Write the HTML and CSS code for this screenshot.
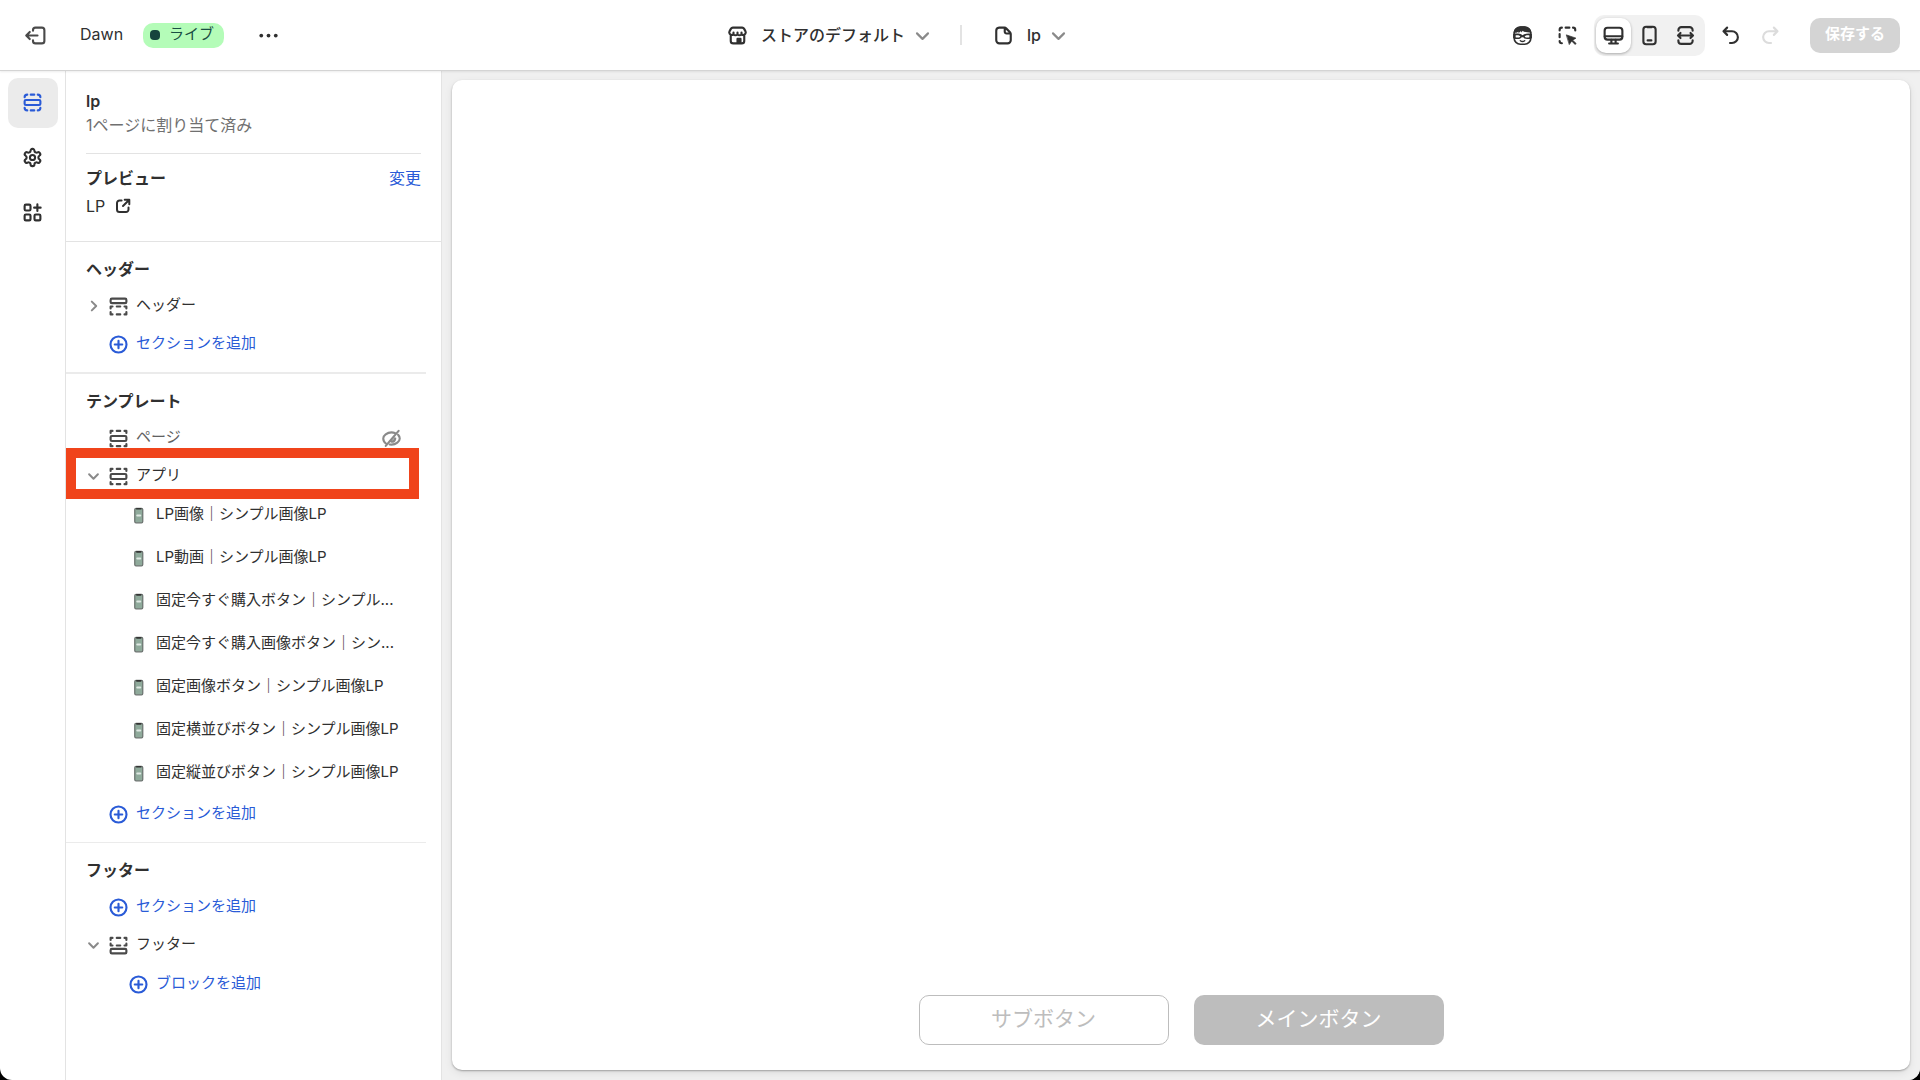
FILE: index.html
```html
<!DOCTYPE html>
<html lang="ja">
<head>
    <meta charset="UTF-8">
    <meta name="viewport" content="width=device-width, initial-scale=1.0">
    <title>Dawn - lp</title>
    <link rel="stylesheet" href="styles.css">
</head>
<body>
    <!-- Icon set -->
    <svg class="icon-defs" aria-hidden="true">
        <symbol id="i-exit" viewBox="0 0 20 20">
            <path d="M8 6.2V5.7a2 2 0 0 1 2-2h5.1a2 2 0 0 1 2 2v8.6a2 2 0 0 1-2 2H10a2 2 0 0 1-2-2v-.5M11.6 10H2.8M5.4 7.2 2.6 10l2.8 2.8"/>
        </symbol>
        <symbol id="i-dots" viewBox="0 0 20 20">
            <g fill="currentColor" stroke="none"><circle cx="4.2" cy="10" r="1.5"/><circle cx="10" cy="10" r="1.5"/><circle cx="15.8" cy="10" r="1.5"/></g>
        </symbol>
        <symbol id="i-store" viewBox="0 0 20 20">
            <path d="M6.2 3.7h7.6c.6 0 1.100.3 1.400.8l1.100 2c.2.4.3.8.3 1.200a2.100 2.100 0 0 1-3.400 1.400 2.200 2.200 0 0 1-3.200 0 2.200 2.200 0 0 1-3.200 0 2.100 2.100 0 0 1-3.400-1.400c0-.4.1-.8.3-1.200l1.100-2c.3-.5.8-.8 1.400-.8ZM4.600 10v4.300a2 2 0 0 0 2 2h6.800a2 2 0 0 0 2-2V10M6.800 9.100V7.600M10 9.100V7.600M13.200 9.100V7.600"/>
            <path d="M10 16v-3.300h2.400V16Z" fill="currentColor"/>
        </symbol>
        <symbol id="i-chevron" viewBox="0 0 20 20">
            <path d="M5.6 8.3 10 12.7l4.4-4.4"/>
        </symbol>
        <symbol id="i-page" viewBox="0 0 20 20">
            <path d="M6.500 3.700h4.300c.5 0 1 .2 1.300.6l3.100 3.100c.4.4.6.8.6 1.300v5.100a2.500 2.500 0 0 1-2.500 2.500H6.700a2.500 2.500 0 0 1-2.500-2.500V6.200a2.500 2.500 0 0 1 2.300-2.500ZM11 4v3a1.400 1.400 0 0 0 1.400 1.400h3"/>
        </symbol>
        <symbol id="i-mask" viewBox="0 0 20 20">
            <path stroke-width="1.300" d="M3.300 8.300V8a5 5 0 0 1 5-4.800h3.400a5 5 0 0 1 5 4.800v4a5 5 0 0 1-5 5H8.300a5 5 0 0 1-5-5Z"/>
            <path d="M2.900 7.900C2.900 4.300 6 2.500 10 2.500s7.200 2 7.100 5.400c-2.700-.7-5.300-.2-7.100-1.800-.2.5-.4 1-.9 1.400l-.3-1.100-2 1.700V7c-1 .7-2.300.9-3.900.9Z" fill="currentColor" stroke="none"/>
            <path d="M2.500 8.700c2.700-.5 5.300-.4 7.500 1 2.200-1.400 4.800-1.500 7.500-1v3.200c-2.800 1.500-5.600 1.300-6.900-.6H9.400c-1.300 1.900-4.100 2.100-6.900.6Z" fill="currentColor" stroke="none"/>
            <path d="M4.500 9.900c1.500-.4 3.100 0 3.800.8-.9 1-2.700 1.200-3.800.6ZM15.500 9.900c-1.500-.4-3.100 0-3.800.8.9 1 2.700 1.200 3.800.6Z" fill="#fff" stroke="none"/>
            <path d="M8.300 14.200c1 .8 2.400.8 3.400 0" stroke-width="1.200"/>
        </symbol>
        <symbol id="i-inspect" viewBox="0 0 20 20">
            <path d="M3.700 6V5.500a1.800 1.800 0 0 1 1.800-1.800M8.500 3.700h3M14.400 3.700a1.800 1.800 0 0 1 1.800 1.800V6M3.700 8.800v2.600M3.700 14.400a1.800 1.800 0 0 0 1.800 1.800"/>
            <path d="m9.300 9.600 7.400 2.500-2.600 1.600 2.800 2.700-.8.800-2.800-2.800-1.700 2.600Z" fill="currentColor" stroke-width=".6"/>
        </symbol>
        <symbol id="i-desktop" viewBox="0 0 20 20">
            <rect x="2.900" y="3.800" width="14.200" height="9.500" rx="2.300"/>
            <path d="M3 10.600h14M8.300 13.500v2.800M11.700 13.500v2.800M6.500 16.400h7"/>
        </symbol>
        <symbol id="i-phone" viewBox="0 0 20 20">
            <rect x="5.100" y="3" width="9.800" height="14" rx="2.200"/>
            <path d="M8.300 3.300h3.400M8.500 13.900h3"/>
        </symbol>
        <symbol id="i-wide" viewBox="0 0 20 20">
            <path d="M4.300 6.200V5.700a2.400 2.400 0 0 1 2.400-2.400h6.600a2.400 2.400 0 0 1 2.400 2.400v.5M4.300 13.800v.5a2.400 2.400 0 0 0 2.400 2.400h6.600a2.400 2.400 0 0 0 2.400-2.400v-.5M4.300 10h11.400M6 8l-2 2 2 2M14 8l2 2-2 2"/>
        </symbol>
        <symbol id="i-undo" viewBox="0 0 20 20">
            <path d="M7.300 3.700 4.400 6.600l2.900 2.900M4.600 6.600h6.600a4.700 4.700 0 0 1 0 9.400H9.600"/>
        </symbol>
        <symbol id="i-sections" viewBox="0 0 20 20">
            <rect x="3.700" y="8" width="12.600" height="4" rx="1"/>
            <path d="M3.700 5.800a2.100 2.100 0 0 1 2.100-2.100M8.600 3.700h2.800M14.200 3.700a2.100 2.100 0 0 1 2.100 2.100M3.700 14.200a2.100 2.100 0 0 0 2.100 2.100M8.600 16.300h2.800M14.200 16.300a2.100 2.100 0 0 0 2.100-2.100"/>
        </symbol>
        <symbol id="i-section" viewBox="0 0 20 20">
            <rect x="3.700" y="8" width="12.600" height="4" rx="1"/>
            <path d="M3.700 5.600V3.900h1.500M8.600 3.900h2.800M14.800 3.900h1.500v1.700M3.700 14.400v1.700h1.500M8.600 16.100h2.800M14.800 16.100h1.500v-1.700"/>
        </symbol>
        <symbol id="i-section-top" viewBox="0 0 20 20">
            <rect x="3.700" y="3.700" width="12.600" height="3.600" rx="1"/>
            <path d="M3.700 11.500V10h1.500M8.600 10h2.800M14.800 10h1.500v1.500M3.700 14.400v1.900h1.500M8.600 16.300h2.800M14.800 16.300h1.500v-1.900"/>
        </symbol>
        <symbol id="i-section-bottom" viewBox="0 0 20 20">
            <rect x="3.700" y="12.700" width="12.600" height="3.600" rx="1"/>
            <path d="M3.700 5.600V3.900h1.500M8.600 3.900h2.800M14.800 3.900h1.500v1.700M3.700 8.500V10h1.500M8.600 10h2.800M14.800 10h1.500V8.500"/>
        </symbol>
        <symbol id="i-gear" viewBox="-2.500 -2.500 29 29">
            <path stroke-width="2.400" d="M12.220 2h-.44a2 2 0 0 0-2 2v.18a2 2 0 0 1-1 1.730l-.43.25a2 2 0 0 1-2 0l-.15-.08a2 2 0 0 0-2.730.73l-.22.38a2 2 0 0 0 .73 2.730l.15.1a2 2 0 0 1 1 1.720v.51a2 2 0 0 1-1 1.740l-.15.09a2 2 0 0 0-.73 2.730l.22.38a2 2 0 0 0 2.730.73l.15-.08a2 2 0 0 1 2 0l.43.25a2 2 0 0 1 1 1.730V20a2 2 0 0 0 2 2h.44a2 2 0 0 0 2-2v-.18a2 2 0 0 1 1-1.730l.43-.25a2 2 0 0 1 2 0l.15.08a2 2 0 0 0 2.730-.73l.22-.39a2 2 0 0 0-.73-2.730l-.15-.08a2 2 0 0 1-1-1.740v-.5a2 2 0 0 1 1-1.740l.15-.09a2 2 0 0 0 .73-2.730l-.22-.38a2 2 0 0 0-2.730-.73l-.15.08a2 2 0 0 1-2 0l-.43-.25a2 2 0 0 1-1-1.730V4a2 2 0 0 0-2-2z"/>
            <circle cx="12" cy="12" r="3" stroke-width="2.400"/>
        </symbol>
        <symbol id="i-apps" viewBox="0 0 20 20">
            <rect x="3.700" y="3.700" width="4.700" height="4.700" rx="1"/>
            <rect x="3.700" y="11.600" width="4.700" height="4.700" rx="1"/>
            <rect x="11.600" y="11.600" width="4.700" height="4.700" rx="1"/>
            <path d="M13.900 3.500v5.200M11.300 6.100h5.200"/>
        </symbol>
        <symbol id="i-external" viewBox="0 0 20 20">
            <path d="M8.600 4.500H6.500a2.500 2.500 0 0 0-2.500 2.500v6.500A2.500 2.500 0 0 0 6.500 16H13a2.500 2.500 0 0 0 2.500-2.500v-2.100M11.700 3.700h4.600v4.600M16 4l-6 6"/>
        </symbol>
        <symbol id="i-plus" viewBox="0 0 20 20">
            <circle cx="10" cy="10" r="6.400"/>
            <path d="M10 7v6M7 10h6"/>
        </symbol>
        <symbol id="i-hidden" viewBox="0 0 20 20">
            <path d="M5.600 14c-1.300-.9-2.200-2.300-2.200-4 0-2.300 3-4.900 6.600-4.900 1 0 1.900.2 2.700.5M15.300 7.100c.9.900 1.300 1.900 1.300 2.900 0 2.300-3 4.900-6.600 4.900-.5 0-1 0-1.400-.1M15.700 3.900 5.400 15.900M13 10a3 3 0 0 1-3 2.600"/>
            <path d="m7.600 12.200 4.400-4.800.9 2.600-2.700 2.700Z" fill="currentColor" stroke="none" opacity=".6"/>
        </symbol>
        <symbol id="i-device" viewBox="0 0 20 20">
            <rect x="7" y="4.300" width="6.400" height="11.500" rx="1" fill="#8faa9b" stroke="#6c7370" stroke-width="1"/>
            <path d="M8.700 4.600h3" stroke="#333" stroke-width="1.400"/>
            <path d="M9 10h2.400" stroke="#dfe8e3" stroke-width="1.600"/>
        </symbol>
    </svg>

    <div class="editor">
        <!-- Top bar -->
        <header class="topbar">
            <div class="topbar-half">
                <div class="theme-info">
                    <button class="icon-button exit-button" aria-label="終了"><svg class="icon"><use href="#i-exit"/></svg></button>
                    <span class="theme-name">Dawn</span>
                    <span class="badge"><span class="badge-dot"></span><span class="badge-text">ライブ</span></span>
                    <button class="icon-button" aria-label="その他"><svg class="icon"><use href="#i-dots"/></svg></button>
                </div>
                <button class="picker">
                    <svg class="icon"><use href="#i-store"/></svg>
                    <span class="picker-name">ストアのデフォルト</span>
                    <svg class="icon chevron"><use href="#i-chevron"/></svg>
                </button>
            </div>
            <div class="topbar-half">
                <span class="topbar-divider"></span>
                <button class="picker">
                    <svg class="icon"><use href="#i-page"/></svg>
                    <span class="picker-name">lp</span>
                    <svg class="icon chevron"><use href="#i-chevron"/></svg>
                </button>
                <div class="tools">
                    <div class="tool-group">
                        <button class="icon-button" aria-label="Sidekick"><svg class="icon"><use href="#i-mask"/></svg></button>
                        <button class="icon-button" aria-label="インスペクター"><svg class="icon"><use href="#i-inspect"/></svg></button>
                    </div>
                    <div class="segmented">
                        <button class="segment active" aria-label="デスクトップ"><svg class="icon"><use href="#i-desktop"/></svg></button>
                        <button class="segment" aria-label="モバイル"><svg class="icon"><use href="#i-phone"/></svg></button>
                        <button class="segment" aria-label="全画面"><svg class="icon"><use href="#i-wide"/></svg></button>
                    </div>
                    <div class="history">
                        <button class="icon-button" aria-label="元に戻す"><svg class="icon"><use href="#i-undo"/></svg></button>
                        <button class="icon-button redo" aria-label="やり直す" disabled><svg class="icon"><use href="#i-undo"/></svg></button>
                    </div>
                    <button class="save-button" disabled>保存する</button>
                </div>
            </div>
        </header>

        <div class="workspace">
            <!-- Icon rail -->
            <nav class="rail">
                <button class="rail-button active" aria-label="セクション"><svg class="icon"><use href="#i-sections"/></svg></button>
                <button class="rail-button" aria-label="テーマ設定"><svg class="icon"><use href="#i-gear"/></svg></button>
                <button class="rail-button" aria-label="アプリを埋め込む"><svg class="icon"><use href="#i-apps"/></svg></button>
            </nav>

            <!-- Section tree -->
            <aside class="panel">
                <div class="panel-head">
                    <div class="template-info">
                        <h1>lp</h1>
                        <p>1ページに割り当て済み</p>
                    </div>
                    <div class="preview-info">
                        <div class="preview-title">
                            <h2>プレビュー</h2>
                            <a class="change-link" href="#">変更</a>
                        </div>
                        <a class="preview-link" href="#">LP <svg class="icon"><use href="#i-external"/></svg></a>
                    </div>
                </div>

                <section class="group">
                    <h2>ヘッダー</h2>
                    <div class="row">
                        <button class="toggle closed" aria-label="開く"><svg class="icon"><use href="#i-chevron"/></svg></button>
                        <button class="item"><svg class="icon"><use href="#i-section-top"/></svg><span class="label">ヘッダー</span></button>
                    </div>
                    <div class="row">
                        <button class="item add"><svg class="icon"><use href="#i-plus"/></svg><span class="label">セクションを追加</span></button>
                    </div>
                </section>

                <section class="group">
                    <h2>テンプレート</h2>
                    <div class="row muted">
                        <button class="item"><svg class="icon"><use href="#i-section"/></svg><span class="label">ページ</span></button>
                        <button class="icon-button visibility" aria-label="表示する"><svg class="icon"><use href="#i-hidden"/></svg></button>
                    </div>
                    <div class="row highlighted">
                        <button class="toggle" aria-label="閉じる"><svg class="icon"><use href="#i-chevron"/></svg></button>
                        <button class="item"><svg class="icon"><use href="#i-section"/></svg><span class="label">アプリ</span></button>
                    </div>
                    <ul class="blocks">
                        <li><button class="item"><svg class="icon"><use href="#i-device"/></svg><span class="label">LP画像｜シンプル画像LP</span></button></li>
                        <li><button class="item"><svg class="icon"><use href="#i-device"/></svg><span class="label">LP動画｜シンプル画像LP</span></button></li>
                        <li><button class="item"><svg class="icon"><use href="#i-device"/></svg><span class="label">固定今すぐ購入ボタン｜シンプル...</span></button></li>
                        <li><button class="item"><svg class="icon"><use href="#i-device"/></svg><span class="label">固定今すぐ購入画像ボタン｜シン...</span></button></li>
                        <li><button class="item"><svg class="icon"><use href="#i-device"/></svg><span class="label">固定画像ボタン｜シンプル画像LP</span></button></li>
                        <li><button class="item"><svg class="icon"><use href="#i-device"/></svg><span class="label">固定横並びボタン｜シンプル画像LP</span></button></li>
                        <li><button class="item"><svg class="icon"><use href="#i-device"/></svg><span class="label">固定縦並びボタン｜シンプル画像LP</span></button></li>
                    </ul>
                    <div class="row">
                        <button class="item add"><svg class="icon"><use href="#i-plus"/></svg><span class="label">セクションを追加</span></button>
                    </div>
                </section>

                <section class="group">
                    <h2>フッター</h2>
                    <div class="row">
                        <button class="item add"><svg class="icon"><use href="#i-plus"/></svg><span class="label">セクションを追加</span></button>
                    </div>
                    <div class="row">
                        <button class="toggle" aria-label="閉じる"><svg class="icon"><use href="#i-chevron"/></svg></button>
                        <button class="item"><svg class="icon"><use href="#i-section-bottom"/></svg><span class="label">フッター</span></button>
                    </div>
                    <ul class="blocks">
                        <li><button class="item add"><svg class="icon"><use href="#i-plus"/></svg><span class="label">ブロックを追加</span></button></li>
                    </ul>
                </section>
            </aside>

            <!-- Store preview -->
            <main class="canvas">
                <div class="preview">
                    <div class="fixed-buttons">
                        <button class="cta cta-sub">サブボタン</button>
                        <button class="cta cta-main">メインボタン</button>
                    </div>
                </div>
            </main>
        </div>
    </div>
</body>
</html>
```

FILE: styles.css
```css
* {
    box-sizing: border-box;
}

html {
    background: #000;
}

body {
    margin: 0;
    color: #303030;
    font-family: Inter, "Noto Sans CJK JP", sans-serif;
    font-size: 16px;
    line-height: 24px;
}

h1,
h2,
p,
ul {
    margin: 0;
    padding: 0;
}

h1,
h2 {
    font-size: 16px;
    font-weight: 600;
}

ul {
    list-style: none;
}

a {
    color: inherit;
    text-decoration: none;
}

button {
    display: flex;
    align-items: center;
    padding: 0;
    border: none;
    background: none;
    color: inherit;
    font: inherit;
    cursor: pointer;
}

.icon-defs {
    display: none;
}

.icon {
    display: block;
    flex: none;
    width: 25px;
    height: 25px;
    fill: none;
    stroke: currentColor;
    stroke-width: 1.7;
    stroke-linecap: round;
    stroke-linejoin: round;
}

.editor {
    display: flex;
    flex-direction: column;
    min-height: 100vh;
    background: #fff;
    border-radius: 0 0 12px 12px;
    overflow: hidden;
}

/* Top bar */
.topbar {
    display: grid;
    grid-template-columns: 1fr 1fr;
    height: 71px;
    border-bottom: 1px solid #d4d4d4;
    box-shadow: 0 1px 2px rgba(0, 0, 0, 0.08);
    z-index: 1;
}

.topbar-half {
    display: flex;
    align-items: center;
}

.theme-info {
    display: flex;
    align-items: center;
    flex: 1;
    padding-left: 23px;
}

.exit-button {
    color: #4a4a4a;
}

.theme-name {
    margin: 0 20px 3px 32px;
}

.badge {
    display: flex;
    align-items: center;
    gap: 9px;
    height: 25px;
    margin-right: 32px;
    padding: 0 10px 0 7px;
    border-radius: 10px;
    background: #b4fcb8;
    color: #1a4d43;
    font-size: 15px;
}

.badge-text {
    padding-bottom: 2px;
}

.badge-dot {
    width: 10px;
    height: 10px;
    border-radius: 4px;
    background: #16453d;
}

.picker {
    margin: 0 25px 0 29px;
    font-weight: 500;
}

.picker-name {
    margin: 0 5px 0 11px;
}

.chevron {
    color: #8a8a8a;
}

.topbar-divider {
    width: 2px;
    height: 20px;
    background: #e3e3e3;
}

.tools {
    display: flex;
    align-items: center;
    margin-left: auto;
    padding-right: 20px;
}

.tool-group {
    display: flex;
    gap: 20px;
    margin-right: 14px;
}

.segmented {
    display: flex;
    gap: 1px;
    padding: 3px 2px;
    border-radius: 10px;
    background: #f1f1f1;
}

.segment {
    justify-content: center;
    width: 35px;
    height: 35px;
    border-radius: 10px;
}

.segment.active {
    background: #fff;
    box-shadow: 0 1px 3px rgba(0, 0, 0, 0.3);
}

.history {
    display: flex;
    gap: 15px;
    margin: 0 27px 0 13px;
}

.redo {
    color: #dcdcdc;
    transform: scaleX(-1);
}

.save-button {
    justify-content: center;
    width: 90px;
    height: 35px;
    padding-bottom: 2px;
    border-radius: 10px;
    background: #d4d4d4;
    color: #fff;
    font-size: 15px;
    font-weight: 600;
}

/* Workspace */
.workspace {
    display: flex;
    flex: 1;
}

.rail {
    display: flex;
    flex-direction: column;
    gap: 5px;
    width: 66px;
    padding: 7px 0 0 8px;
    border-right: 1px solid #e3e3e3;
}

.rail-button {
    justify-content: center;
    width: 50px;
    height: 50px;
    padding: 0 1px 1px 0;
    border-radius: 10px;
}

.rail-button.active {
    background: #ebebeb;
    color: #2a5bd7;
}

.panel {
    width: 376px;
    border-right: 1px solid #e3e3e3;
}

.panel-head {
    padding: 18px 20px 23px 20px;
    border-bottom: 1px solid #e3e3e3;
}

.template-info {
    padding-bottom: 16px;
    border-bottom: 1px solid #e3e3e3;
}

.template-info p {
    color: #707070;
}

.preview-info {
    display: flex;
    flex-direction: column;
    gap: 4px;
    padding-top: 12px;
}

.preview-title {
    display: flex;
    justify-content: space-between;
}

.change-link {
    color: #2a5bd7;
}

.preview-link {
    display: flex;
    align-items: center;
    gap: 8px;
}

.preview-link .icon {
    width: 20px;
    height: 20px;
    stroke-width: 2;
}

.group {
    margin-right: 15px;
    padding: 15px 0 9px;
}

.group + .group {
    border-top: 2px solid #ebebeb;
}

.group + .group + .group {
    border-top-width: 1px;
}

.group h2 {
    margin-bottom: 6px;
    padding-left: 20px;
}

.row {
    display: flex;
    align-items: center;
    justify-content: space-between;
    position: relative;
    height: 38px;
    padding: 0 22px 0 40px;
    color: #4a4a4a;
}

.row .toggle {
    margin-left: -25px;
    color: #8a8a8a;
}

.toggle .icon {
    width: 25px;
    height: 20px;
    stroke-width: 2;
}

.toggle.closed .icon {
    transform: rotate(-90deg);
}

.item {
    gap: 5px;
    flex: 1;
    min-width: 0;
    height: 100%;
    text-align: left;
}

.label {
    padding-bottom: 3px;
    overflow: hidden;
    color: #303030;
    font-size: 15px;
    text-overflow: ellipsis;
    white-space: nowrap;
}

.muted .label {
    color: #616161;
}

.add,
.add .label {
    color: #2a5bd7;
}

.visibility {
    color: #8a8a8a;
}

.highlighted::after {
    content: "";
    position: absolute;
    inset: -9px 7px -4px 0;
    border: 10px solid #f0441b;
    pointer-events: none;
}

.blocks {
    margin-top: -1px;
    padding: 0 24px 0 60px;
}

.blocks li {
    display: flex;
    height: 43px;
}

/* Preview */
.canvas {
    display: flex;
    flex: 1;
    padding: 9px 10px 10px;
    background: #f0f0f0;
}

.preview {
    display: flex;
    flex: 1;
    align-items: flex-end;
    justify-content: center;
    padding-bottom: 25px;
    border-radius: 10px;
    background: #fff;
    box-shadow: 0 1px 2px rgba(0, 0, 0, 0.3), 0 3px 8px rgba(0, 0, 0, 0.08);
}

.fixed-buttons {
    display: flex;
    gap: 25px;
}

.cta {
    justify-content: center;
    width: 250px;
    height: 50px;
    padding-bottom: 2px;
    border-radius: 10px;
    font-size: 21px;
}

.cta-sub {
    border: 1px solid #bdbdbd;
    color: #bdbdbd;
}

.cta-main {
    background: #bdbdbd;
    color: #fff;
}
```
